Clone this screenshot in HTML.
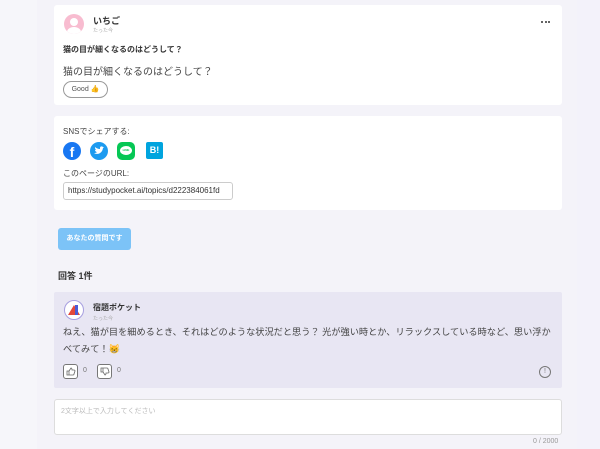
<!DOCTYPE html>
<html><head><meta charset="utf-8"><style>
*{box-sizing:border-box;margin:0;padding:0}
body{width:600px;height:449px;overflow:hidden;background:#f3f2fa;font-family:"Liberation Sans","Noto Sans CJK JP",sans-serif;color:#333;position:relative}
.left{position:absolute;left:0;top:0;width:37px;height:449px;background:#f6f6fa}
.main{position:absolute;left:37px;top:0;width:540px;height:449px;background:#f4f3f9}
.card{position:absolute;left:54px;width:508px;background:#fff;border-radius:3px}
.abs{position:absolute}
.dot{position:absolute;top:0;width:2px;height:2px;border-radius:50%;background:#333}
</style></head><body>
<div class="left"></div><div class="main"></div>
<div class="card" style="top:5px;height:100px">
 <div class="abs" style="left:10px;top:9px;width:20px;height:20px;border-radius:50%;background:#f8bcd0;overflow:hidden">
  <div class="abs" style="left:6px;top:4px;width:8px;height:8px;border-radius:50%;background:#fff"></div>
  <div class="abs" style="left:3px;top:13px;width:14px;height:10px;border-radius:50%;background:#fff"></div>
 </div>
 <div class="abs" style="left:39px;top:9px;font-size:9px;font-weight:bold">いちご</div>
 <div class="abs" style="left:39px;top:22px;font-size:5px;color:#aaa">たった今</div>
 <div class="abs" style="left:487px;top:16px;width:10px;height:2px"><div class="dot" style="left:0"></div><div class="dot" style="left:3.5px"></div><div class="dot" style="left:7px"></div></div>
 <div class="abs" style="left:9px;top:39px;font-size:8px;font-weight:bold">猫の目が細くなるのはどうして？</div>
 <div class="abs" style="left:9px;top:58px;font-size:10px;color:#444">猫の目が細くなるのはどうして？</div>
 <div class="abs" style="left:9px;top:76px;width:45px;height:17px;border:1px solid #999;border-radius:9px;font-size:7px;text-align:center;line-height:15px;color:#555">Good <span style="color:#d9a23a">👍</span></div>
</div>
<div class="card" style="top:116px;height:94px">
 <div class="abs" style="left:9px;top:10px;font-size:8px;color:#444">SNSでシェアする:</div>
 <div class="abs" style="left:9px;top:26px;width:18px;height:18px;border-radius:50%;background:#1877f2;color:#fff;font-weight:bold;font-size:14px;text-align:center;line-height:20px">f</div>
 <div class="abs" style="left:36px;top:26px;width:18px;height:18px;border-radius:50%;background:#1d9bf0"><svg width="18" height="18" viewBox="0 0 18 18"><path d="M4 11c3 2 8 1 9-5l1-1-1 0c-1-1-3-1-3 1v1c-2 0-4-1-5-2 0 1 0 2 1 3h-1c0 1 1 2 2 2-1 1-2 1-3 1z" fill="#fff"/></svg></div>
 <div class="abs" style="left:63px;top:26px;width:18px;height:18px;border-radius:5px;background:#06c755"><div class="abs" style="left:3px;top:4px;width:12px;height:9px;border-radius:50%;background:#fff;font-size:3px;color:#06c755;text-align:center;line-height:9px;font-weight:bold">LINE</div></div>
 <div class="abs" style="left:92px;top:26px;width:17px;height:17px;border-radius:2px;background:#00a4de;color:#fff;font-size:9px;font-weight:bold;text-align:center;line-height:17px">B!</div>
 <div class="abs" style="left:9px;top:52px;font-size:8px;color:#444">このページのURL:</div>
 <div class="abs" style="left:9px;top:66px;width:170px;height:18px;border:1px solid #ccc;border-radius:3px;font-size:8px;line-height:16px;padding-left:4px;color:#333;white-space:nowrap;overflow:hidden">https://studypocket.ai/topics/d222384061fd</div>
</div>
<div class="abs" style="left:58px;top:228px;width:73px;height:22px;background:#7cc3f7;border-radius:3px;color:#fff;font-size:7px;font-weight:bold;text-align:center;line-height:22px">あなたの質問です</div>
<div class="abs" style="left:58px;top:269px;font-size:9px;font-weight:bold">回答 1件</div>
<div class="abs" style="left:54px;top:292px;width:508px;height:96px;background:#e8e6f3;border-radius:2px">
 <div class="abs" style="left:10px;top:8px;width:20px;height:20px;border-radius:50%;border:1px solid #a79fe0;background:#fff">
  <div class="abs" style="left:3px;top:4px;width:0;height:0;border-left:6px solid transparent;border-right:6px solid transparent;border-bottom:10px solid #e2483b"></div>
  <div class="abs" style="left:10px;top:4px;width:3px;height:10px;background:#4a5bd6"></div>
 </div>
 <div class="abs" style="left:39px;top:10px;font-size:8px;font-weight:bold">宿題ポケット</div>
 <div class="abs" style="left:39px;top:23px;font-size:5px;color:#aaa">たった今</div>
 <div class="abs" style="left:9px;top:32px;width:490px;font-size:9.2px;line-height:17px;color:#444">ねえ、猫が目を細めるとき、それはどのような状況だと思う？ 光が強い時とか、リラックスしている時など、思い浮かべてみて！😸</div>
 <div class="abs" style="left:9px;top:72px;width:15px;height:15px;border:1px solid #777;border-radius:3px;background:#fff"><svg width="13" height="13" viewBox="0 0 13 13"><path d="M3 6h2v4H3zM5 6l2-3c1 0 1 1 1 2h2c1 0 1 1 1 1l-1 3c0 1-1 1-1 1H5" fill="none" stroke="#666" stroke-width="0.8"/></svg></div>
 <div class="abs" style="left:29px;top:75px;font-size:7px;color:#777">0</div>
 <div class="abs" style="left:43px;top:72px;width:15px;height:15px;border:1px solid #777;border-radius:3px;background:#fff"><svg width="13" height="13" viewBox="0 0 13 13"><path d="M3 3h2v4H3zM5 7l2 3c1 0 1-1 1-2h2c1 0 1-1 1-1l-1-3c0-1-1-1-1-1H5" fill="none" stroke="#666" stroke-width="0.8"/></svg></div>
 <div class="abs" style="left:63px;top:75px;font-size:7px;color:#777">0</div>
 <div class="abs" style="left:485px;top:74px;width:12px;height:12px;border:1px solid #777;border-radius:50%;font-size:7px;text-align:center;line-height:10px;color:#777">!</div>
</div>
<div class="abs" style="left:54px;top:399px;width:508px;height:36px;background:#fff;border:1px solid #ddd;border-radius:3px">
 <div class="abs" style="left:6px;top:6px;font-size:7px;color:#bbb">2文字以上で入力してください</div>
</div>
<div class="abs" style="left:533px;top:438px;font-size:7px;color:#999">0 / 2000</div>
</body></html>
